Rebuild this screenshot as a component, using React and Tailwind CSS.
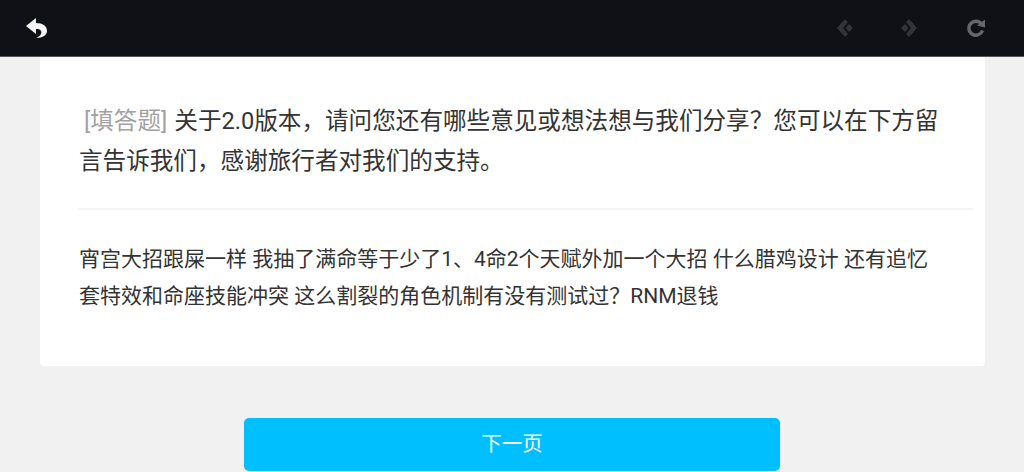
export default function App() {
  const font = { fontFamily: 'Roboto, "Noto Sans CJK SC", sans-serif' };
  return (
    <div style={font} className="w-[1024px] h-[472px] overflow-hidden bg-[#f1f1f1] flex flex-col">
      <header className="h-[57px] shrink-0 bg-[#101116] border-b border-[#55565a] flex items-center justify-between pl-[25px] pr-[38px]">
        <svg width="23" height="22" viewBox="0 0 23 22" fill="#f4f4f4">
          <path d="M1 9 L11 1 L11 6 C18 6 22 9 22 14 C22 18 18 21 11 21 C16 19 17 16 16 14 C15 12 13 12 11 12 L11 17 Z" />
        </svg>
        <div className="flex items-center">
          <svg width="18" height="20" viewBox="0 0 18 20" fill="#333438" className="mr-[46px]">
            <path d="M9 1 L12 4 L7 10 L12 16 L9 19 L1 10 Z" />
            <path d="M13 6 L17 10 L13 14 L9.5 10 Z" />
          </svg>
          <svg width="18" height="20" viewBox="0 0 18 20" fill="#333438" className="mr-[48px]">
            <path d="M9 1 L6 4 L11 10 L6 16 L9 19 L17 10 Z" />
            <path d="M5 6 L1 10 L5 14 L8.5 10 Z" />
          </svg>
          <svg width="20" height="20" viewBox="0 0 20 20" fill="none">
            <path d="M15.5 6 A7 7 0 1 0 16.5 12.5" stroke="#66676b" strokeWidth="3.4" />
            <path d="M11 7.5 L19 1.5 L19 9.5 Z" fill="#66676b" />
          </svg>
        </div>
      </header>
      <main className="flex flex-col items-center">
        <section className="w-[945px] self-start ml-[40px] h-[309px] bg-white rounded-b-[4px] px-[40px] pt-[44px]">
          <p className="text-[23.6px] leading-[40px] text-[#333333] -mr-[8px] -ml-[1px]">
            <span className="text-[#a2a2a2] ml-[5px] mr-[7px]">[填答题]</span>关于2.0版本，请问您还有哪些意见或想法想与我们分享？您可以在下方留言告诉我们，感谢旅行者对我们的支持。
          </p>
          <div className="h-[2px] bg-[#f5f5f5] mt-[27px] mb-[31px] -mr-[28px] -ml-[2px]" />
          <p className="text-[21px] leading-[37px] text-[#333333] -ml-[1px]">
            宵宫大招跟屎一样 我抽了满命等于少了1、4命2个天赋外加一个大招 什么腊鸡设计 还有追忆套特效和命座技能冲突 这么割裂的角色机制有没有测试过？RNM退钱
          </p>
        </section>
        <button className="mt-[52px] w-[536px] h-[53px] shrink-0 rounded-[5px] bg-[#00bfff] text-white text-[20.5px]">
          下一页
        </button>
      </main>
    </div>
  );
}
